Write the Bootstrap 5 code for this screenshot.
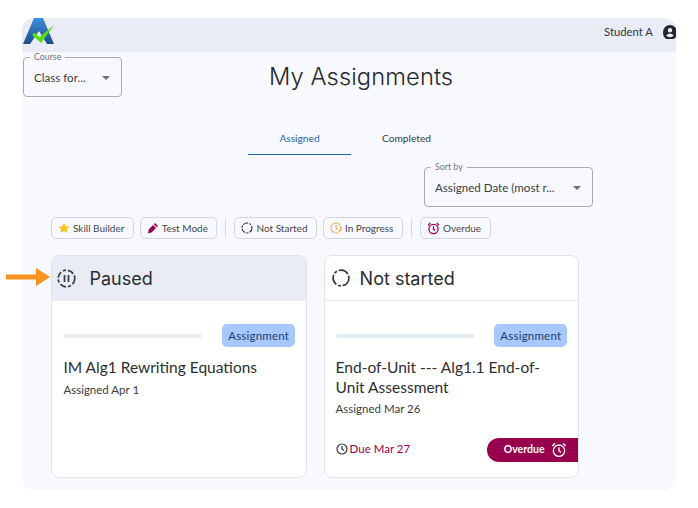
<!DOCTYPE html>
<html lang="en">
<head>
    <meta charset="UTF-8">
    <meta name="viewport" content="width=device-width, initial-scale=1.0">
    <title>My Assignments</title>
    <link href="https://cdn.jsdelivr.net/npm/bootstrap@5.3.0/dist/css/bootstrap.min.css" rel="stylesheet">
    <style>
        body { background: #fff; font-family: "Lato", "Liberation Sans", sans-serif; color: #2b2d33; overflow: hidden; }
        .shell { position: relative; width: 654px; height: 472px; margin: 18px 0 0 22px; background: #f8f9fe; border-radius: 12px; }
        .topbar { height: 34px; background: #e9ecf5; border-radius: 12px 12px 0 0; overflow: hidden; }
        .brand-logo { margin-left: 1px; align-self: flex-start; }
        .user-box { padding-bottom: 6px; }
        .user-name { font-size: 11.3px; margin-right: 10px; color: #33353a; }
        .user-icon { margin-right: -1px; }
        .outlined { border: 1px solid #a9abb2; border-radius: 4px; margin: 0; padding: 0 11px 0 10px; }
        .outlined legend { font-size: 8.8px; line-height: 10px; color: #74767c; margin: -5px 0 0 -4px; padding: 0 4px; }
        .outlined-row { height: 24px; margin-top: 4px; }
        .outlined-value { font-size: 11.6px; color: #3c3e44; white-space: nowrap; }
        .caret-down { width: 0; height: 0; border-left: 4.5px solid transparent; border-right: 4.5px solid transparent; border-top: 4.5px solid #6d6f75; }
        .course-select { width: 99px; height: 45px; margin-left: 1px; }
        .page-title { font-family: "Inter", "Noto Sans", sans-serif; font-weight: 300; font-size: 23.7px; line-height: 30px; margin: 10px 0 0 147px; color: #26282d; letter-spacing: .1px; }
        .tab-row { margin-top: 22px; padding-left: 226px; }
        .tab-link { width: 103px; height: 36px; font-size: 10.2px; line-height: 38px; text-align: center; color: #3a3c42; padding: 0; border: 0; border-radius: 0; }
        .tab-link.active { color: #1f63a8; border-bottom: 1px solid #1f63a8; }
        .tab-gap { margin-left: 4px; }
        .sort-select { width: 169px; height: 45px; margin: 7px 0 0 402px; }
        .filter-row { margin: 10px 0 0 29px; height: 22px; }
        .chip { height: 22px; border: 1px solid #d3d7e4; border-radius: 5px; background: #f8f9fe; font-size: 10px; color: #44464c; padding: 0 8.5px 0 6px; gap: 3px; white-space: nowrap; }
        .chip-gap { margin-left: 6px; }
        .chip-sep { width: 1px; height: 18px; background: #d5d7dd; margin: 0 8px 0 8px; }
        .task-row { margin: 16px 0 0 29.4px; gap: 17px; }
        .task-card { width: 255.2px; height: 223px; border: 1px solid #e1e3e9; border-radius: 8px; background: #fff; overflow: hidden; }
        .task-card .card-header { height: 45px; padding: 0 7px; gap: 13px; font-family: "Inter", "Noto Sans", sans-serif; font-size: 18px; font-weight: 400; color: #2a2c31; border-bottom: 1px solid #e5e7ec; background: #fff; }
        .task-card .card-header.is-paused { background: #e9ecf5; border-bottom: 0; padding-left: 5px; }
        .task-card .card-header.is-fresh { gap: 10px; }
        .task-card .card-body { padding: 23px 10.5px 0 11px; }
        .progress-line { width: 139px; height: 4px; border-radius: 2px; background: #eeeff1; }
        .progress-line.is-blue { background: #e3ebf5; }
        .kind-tag { background: #a6c8ff; color: #1c3f6e; font-size: 11.5px; font-weight: 400; line-height: 23px; height: 23px; padding: 0 6px; border-radius: 5px; letter-spacing: .2px; }
        .task-name { font-size: 15.5px; line-height: 19.5px; margin: 11px 0 4px; color: #2c2e33; font-weight: 400; }
        .task-date { font-size: 11.5px; line-height: 16px; color: #3a3c42; }
        .due-text { position: absolute; left: 11px; bottom: 20px; font-size: 11.5px; line-height: 16px; color: #97004d; gap: 2px; }
        .overdue-pill { position: absolute; right: 0; bottom: 15px; width: 91px; height: 24px; background: #97004d; color: #fff; font-size: 10.5px; font-weight: 700; border-radius: 12px 0 0 12px; gap: 6px; padding-left: 17px; }
        .pointer-arrow { position: absolute; left: -16px; top: 250px; }
    </style>
</head>
<body>
    <div class="shell">
        <div class="topbar d-flex align-items-center justify-content-between">
            <svg class="brand-logo" width="32" height="27" viewBox="0 0 32 27">
                <defs><linearGradient id="logoBlue" x1="0" y1="0" x2="0" y2="1"><stop offset="0" stop-color="#3f8fe0"/><stop offset="1" stop-color="#1f4d85"/></linearGradient></defs>
                <path d="M11 0h9l11 26h-7l-8-13-9 13H0z" fill="url(#logoBlue)"/>
                <path d="M9 17l2.500-2.500 5 4.500L31 7 18 25z" fill="#52e012"/>
            </svg>
            <div class="d-flex align-items-center user-box">
                <span class="user-name">Student A</span>
                <svg class="user-icon" width="14" height="14" viewBox="0 0 14 14"><path fill-rule="evenodd" fill="#23262f" d="M7 0a7 7 0 0 1 7 7v1a6 6 0 0 1-14 0V7a7 7 0 0 1 7-7zm0 3a2.200 2.200 0 1 0 0 4.400a2.200 2.200 0 0 0 0-4.400zM3.200 10.500a5 5 0 0 0 7.600 0C10 9.300 8.500 8.800 7 8.800s-3 .5-3.800 1.700z"/></svg>
            </div>
        </div>

        <div class="d-flex align-items-start">
            <fieldset class="outlined course-select">
                <legend class="float-none w-auto">Course</legend>
                <div class="d-flex align-items-center justify-content-between outlined-row">
                    <span class="outlined-value">Class for...</span>
                    <span class="caret-down"></span>
                </div>
            </fieldset>
            <h1 class="page-title">My Assignments</h1>
        </div>

        <div class="nav tab-row">
            <a class="nav-link tab-link active" href="#">Assigned</a>
            <a class="nav-link tab-link tab-gap" href="#">Completed</a>
        </div>

        <fieldset class="outlined sort-select">
            <legend class="float-none w-auto">Sort by</legend>
            <div class="d-flex align-items-center justify-content-between outlined-row">
                <span class="outlined-value">Assigned Date (most r...</span>
                <span class="caret-down"></span>
            </div>
        </fieldset>

        <div class="d-flex align-items-center filter-row">
            <span class="chip d-flex align-items-center">
                <svg width="12" height="12" viewBox="0 0 24 24"><path fill="#fdc31d" d="M12 1l3.400 7.300 7.900 1-5.800 5.500 1.500 7.900L12 17.900l-7 3.800 1.500-7.900L.7 9.300l7.900-1z"/></svg>
                Skill Builder
            </span>
            <span class="chip chip-gap d-flex align-items-center">
                <svg width="12" height="12" viewBox="0 0 24 24"><path fill="#97004d" d="M16 2l6 6-2.500 2.500-6-6zM12 6l6 6-9 9-7 1.500L3.500 15z"/></svg>
                Test Mode
            </span>
            <span class="chip-sep"></span>
            <span class="chip d-flex align-items-center">
                <svg width="12" height="12" viewBox="0 0 24 24"><circle cx="12" cy="12" r="10" fill="none" stroke="#2f3238" stroke-width="2.400" stroke-dasharray="10 2.500 4 2.500"/></svg>
                Not Started
            </span>
            <span class="chip chip-gap d-flex align-items-center">
                <svg width="12" height="12" viewBox="0 0 24 24"><circle cx="12" cy="12" r="10" fill="none" stroke="#f79a2e" stroke-width="2.400" stroke-dasharray="10 2.500 4 2.500"/><path d="M12 6v6.500l4 2.500" fill="none" stroke="#f79a2e" stroke-width="2"/></svg>
                In Progress
            </span>
            <span class="chip-sep"></span>
            <span class="chip d-flex align-items-center">
                <svg width="13" height="13" viewBox="0 0 24 24" fill="none" stroke="#97004d" stroke-width="2.400"><circle cx="12" cy="13" r="8.500"/><path d="M12 8v5.500l3 2M2 6l4-4M22 6l-4-4"/></svg>
                Overdue
            </span>
        </div>

        <div class="d-flex task-row">
            <div class="card task-card">
                <div class="card-header is-paused d-flex align-items-center">
                    <svg width="19" height="19" viewBox="0 0 24 24" fill="none" stroke="#3a3d44" stroke-width="2.200"><circle cx="12" cy="12" r="10.500" stroke-dasharray="8 2.500 4 2.500"/><path d="M9.500 7.500v9M14.500 7.500v9"/></svg>
                    <span>Paused</span>
                </div>
                <div class="card-body">
                    <div class="d-flex align-items-center justify-content-between">
                        <div class="progress-line"></div>
                        <span class="badge kind-tag">Assignment</span>
                    </div>
                    <h5 class="task-name">IM Alg1 Rewriting Equations</h5>
                    <div class="task-date">Assigned Apr 1</div>
                </div>
            </div>
            <div class="card task-card">
                <div class="card-header is-fresh d-flex align-items-center">
                    <svg width="18" height="18" viewBox="0 0 24 24" fill="none" stroke="#2f3238" stroke-width="2.200"><circle cx="12" cy="12" r="10.500" stroke-dasharray="14 2.500 4 2.500"/></svg>
                    <span>Not started</span>
                </div>
                <div class="card-body">
                    <div class="d-flex align-items-center justify-content-between">
                        <div class="progress-line is-blue"></div>
                        <span class="badge kind-tag">Assignment</span>
                    </div>
                    <h5 class="task-name">End-of-Unit --- Alg1.1 End-of-Unit Assessment</h5>
                    <div class="task-date">Assigned Mar 26</div>
                    <div class="due-text d-flex align-items-center">
                        <svg width="12" height="12" viewBox="0 0 24 24" fill="none" stroke="#33363d" stroke-width="2.400"><circle cx="12" cy="12" r="10"/><path d="M12 6v6.500l4 2.500"/></svg>
                        Due Mar 27
                    </div>
                    <div class="overdue-pill d-flex align-items-center">
                        Overdue
                        <svg width="16" height="16" viewBox="0 0 24 24" fill="none" stroke="#fff" stroke-width="2"><circle cx="12" cy="13" r="8.500"/><path d="M12 8v5.500l3 2M2 6l4-4M22 6l-4-4"/></svg>
                    </div>
                </div>
            </div>
        </div>

        <svg class="pointer-arrow" width="44" height="18" viewBox="0 0 44 18"><path fill="#f7931e" d="M0 6.500h30V0l14 9-14 9v-6.500H0z"/></svg>
    </div>
    <script src="https://cdn.jsdelivr.net/npm/bootstrap@5.3.0/dist/js/bootstrap.bundle.min.js"></script>
</body>
</html>
